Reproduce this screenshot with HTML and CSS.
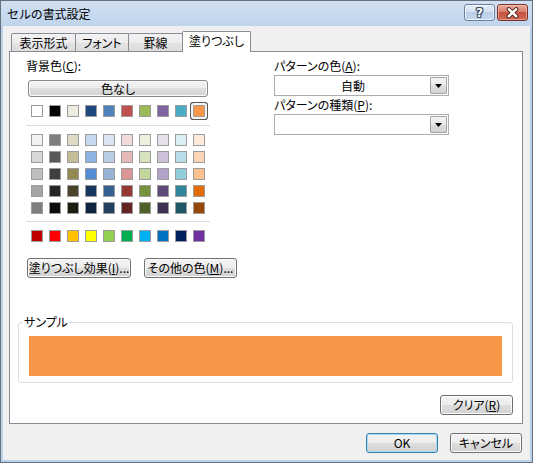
FILE: index.html
```html
<!DOCTYPE html>
<html lang="ja">
<head>
<meta charset="utf-8">
<title>セルの書式設定</title>
<link rel="stylesheet" href="styles.css">
</head>
<body>
<div class="window">
  <div class="titlebar">
    <span class="title">セルの書式設定</span>
    <div class="caption">
      <div class="cap help">?</div>
      <div class="cap close">
        <svg width="31" height="17" viewBox="0 0 31 17">
          <path d="M11.5 5 L19.5 12.5 M19.5 5 L11.5 12.5" stroke="#4b1c16" stroke-width="4.6" stroke-linecap="round" fill="none"/>
          <path d="M11.5 5 L19.5 12.5 M19.5 5 L11.5 12.5" stroke="#ffffff" stroke-width="2.6" stroke-linecap="round" fill="none"/>
        </svg>
      </div>
    </div>
  </div>
  <div class="client">
    <div class="tabs">
      <div class="tab t1">表示形式</div>
      <div class="tab t2">フォント</div>
      <div class="tab t3">罫線</div>
      <div class="tab active">塗りつぶし</div>
    </div>
    <div class="panel">
      <div class="top">
        <div class="left">
          <div class="label">背景色(<u>C</u>):</div>
          <div class="btn nocolor">色なし</div>
          <div class="row theme">
            <span class="sw" style="background:#ffffff"></span>
            <span class="sw" style="background:#000000"></span>
            <span class="sw" style="background:#eeece1"></span>
            <span class="sw" style="background:#1f497d"></span>
            <span class="sw" style="background:#4f81bd"></span>
            <span class="sw" style="background:#c0504d"></span>
            <span class="sw" style="background:#9bbb59"></span>
            <span class="sw" style="background:#8064a2"></span>
            <span class="sw" style="background:#4bacc6"></span>
            <span class="sw selected" style="background:#f79646"></span>
          </div>
          <div class="sep"></div>
          <div class="tints">
            <div class="row">
              <span class="sw" style="background:#f2f2f2"></span>
              <span class="sw" style="background:#7f7f7f"></span>
              <span class="sw" style="background:#ddd9c3"></span>
              <span class="sw" style="background:#c6d9f0"></span>
              <span class="sw" style="background:#dbe5f1"></span>
              <span class="sw" style="background:#f2dcdb"></span>
              <span class="sw" style="background:#ebf1dd"></span>
              <span class="sw" style="background:#e5e0ec"></span>
              <span class="sw" style="background:#dbeef3"></span>
              <span class="sw" style="background:#fdeada"></span>
            </div>
            <div class="row">
              <span class="sw" style="background:#d8d8d8"></span>
              <span class="sw" style="background:#595959"></span>
              <span class="sw" style="background:#c4bd97"></span>
              <span class="sw" style="background:#8db3e2"></span>
              <span class="sw" style="background:#b8cce4"></span>
              <span class="sw" style="background:#e5b9b7"></span>
              <span class="sw" style="background:#d7e3bc"></span>
              <span class="sw" style="background:#ccc1d9"></span>
              <span class="sw" style="background:#b7dde8"></span>
              <span class="sw" style="background:#fbd5b5"></span>
            </div>
            <div class="row">
              <span class="sw" style="background:#bfbfbf"></span>
              <span class="sw" style="background:#3f3f3f"></span>
              <span class="sw" style="background:#938953"></span>
              <span class="sw" style="background:#548dd4"></span>
              <span class="sw" style="background:#95b3d7"></span>
              <span class="sw" style="background:#d99694"></span>
              <span class="sw" style="background:#c3d69b"></span>
              <span class="sw" style="background:#b2a2c7"></span>
              <span class="sw" style="background:#92cddc"></span>
              <span class="sw" style="background:#fac08f"></span>
            </div>
            <div class="row">
              <span class="sw" style="background:#a5a5a5"></span>
              <span class="sw" style="background:#262626"></span>
              <span class="sw" style="background:#494429"></span>
              <span class="sw" style="background:#17365d"></span>
              <span class="sw" style="background:#366092"></span>
              <span class="sw" style="background:#953734"></span>
              <span class="sw" style="background:#76923c"></span>
              <span class="sw" style="background:#5f497a"></span>
              <span class="sw" style="background:#31859b"></span>
              <span class="sw" style="background:#e36c09"></span>
            </div>
            <div class="row">
              <span class="sw" style="background:#7f7f7f"></span>
              <span class="sw" style="background:#0c0c0c"></span>
              <span class="sw" style="background:#1d1b10"></span>
              <span class="sw" style="background:#0f243e"></span>
              <span class="sw" style="background:#244061"></span>
              <span class="sw" style="background:#632423"></span>
              <span class="sw" style="background:#4f6128"></span>
              <span class="sw" style="background:#3f3151"></span>
              <span class="sw" style="background:#205867"></span>
              <span class="sw" style="background:#974806"></span>
            </div>
          </div>
          <div class="sep sep2"></div>
          <div class="row std">
            <span class="sw" style="background:#c00000"></span>
            <span class="sw" style="background:#ff0000"></span>
            <span class="sw" style="background:#ffc000"></span>
            <span class="sw" style="background:#ffff00"></span>
            <span class="sw" style="background:#92d050"></span>
            <span class="sw" style="background:#00b050"></span>
            <span class="sw" style="background:#00b0f0"></span>
            <span class="sw" style="background:#0070c0"></span>
            <span class="sw" style="background:#002060"></span>
            <span class="sw" style="background:#7030a0"></span>
          </div>
        </div>
        <div class="right">
          <div class="label">パターンの色(<u>A</u>):</div>
          <div class="combo">
            <span class="value">自動</span>
            <span class="arrow"><svg width="7" height="4" viewBox="0 0 7 4"><polygon points="0,0 7,0 3.5,4" fill="#000"/></svg></span>
          </div>
          <div class="label label2">パターンの種類(<u>P</u>):</div>
          <div class="combo combo2">
            <span class="value"></span>
            <span class="arrow"><svg width="7" height="4" viewBox="0 0 7 4"><polygon points="0,0 7,0 3.5,4" fill="#000"/></svg></span>
          </div>
        </div>
      </div>
      <div class="effects">
        <div class="btn fx1">塗りつぶし効果(<u>I</u>)...</div>
        <div class="btn fx2">その他の色(<u>M</u>)...</div>
      </div>
      <fieldset class="sample">
        <legend>サンプル</legend>
        <div class="preview"></div>
      </fieldset>
      <div class="clear-row">
        <div class="btn clear">クリア(<u>R</u>)</div>
      </div>
    </div>
    <div class="dialog-buttons">
      <div class="btn dlg default">OK</div>
      <div class="btn dlg">キャンセル</div>
    </div>
  </div>
</div>
</body>
</html>
```
FILE: styles.css
```css
* { box-sizing: border-box; }

body {
  margin: 0;
  font-family: "Noto Sans CJK JP", "Noto Sans", sans-serif;
  font-size: 12px;
  color: #000;
  font-feature-settings: "palt";
}

u { text-decoration: underline; text-underline-offset: 1px; }

.window {
  width: 533px;
  height: 463px;
  border: 1px solid #67717e;
  background: linear-gradient(#d0e0f2, #bfd4ec 25px, #b9d1ea 26px, #b9d1ea);
  display: flex;
  flex-direction: column;
}

.titlebar {
  flex: none;
  height: 25px;
  display: flex;
  align-items: center;
  justify-content: space-between;
  padding: 0 4px 0 6px;
}

.title {
  font-feature-settings: normal;
  line-height: 16px;
  letter-spacing: -0.1px;
}

.caption {
  align-self: flex-start;
  margin-top: 3px;
  display: flex;
  gap: 2px;
}

.cap {
  width: 31px;
  height: 17px;
  border-radius: 3px;
  display: flex;
  align-items: center;
  justify-content: center;
}

.help {
  border: 1px solid #6f819a;
  background: linear-gradient(#e6eef8, #d3e0f0 45%, #bccee6 50%, #c6d8ee);
  box-shadow: inset 0 0 0 1px rgba(255,255,255,0.6);
  color: #fff;
  font-family: "DejaVu Sans", sans-serif;
  font-weight: bold;
  font-size: 12px;
  line-height: 12px;
  text-shadow: 1px 0 0 #3b4e68, -1px 0 0 #3b4e68, 0 1px 0 #3b4e68, 0 -1px 0 #3b4e68,
               1px 1px 0 #3b4e68, -1px -1px 0 #3b4e68, 1px -1px 0 #3b4e68, -1px 1px 0 #3b4e68;
}

.close {
  border: 1px solid #7f3328;
  background: linear-gradient(#eaa99c, #d9806f 45%, #c8513f 50%, #cd6a55);
  box-shadow: inset 0 0 0 1px rgba(255,220,210,0.45);
}

.client {
  flex: 1;
  margin: 0 2px 2px;
  background: #f0f0f0;
  padding-top: 5px;
  display: flex;
  flex-direction: column;
}

.tabs {
  display: flex;
  align-items: flex-end;
  height: 20px;
  margin-left: 8px;
}

.tab {
  height: 18px;
  border: 1px solid #898c95;
  border-bottom: none;
  border-radius: 2px 2px 0 0;
  background: linear-gradient(#f3f3f3, #ececec 50%, #e3e3e3 51%, #dddddd);
  margin-left: -1px;
  display: flex;
  align-items: center;
  justify-content: center;
  line-height: 16px;
  white-space: nowrap;
}

.t1 { width: 65px; margin-left: 0; }
.t2 { width: 54px; }
.t3 { width: 55px; }

.tab.active {
  width: 69px;
  height: 21px;
  background: #fff;
  margin-bottom: -1px;
  position: relative;
  z-index: 1;
  padding-bottom: 2px;
}

.panel {
  margin: 0 7px 0 6px;
  border: 1px solid #898c95;
  background: #fff;
  padding: 6px 0 8px;
}

.top {
  display: grid;
  grid-template-columns: 184px 175px;
  column-gap: 64px;
  padding-left: 16px;
}

.label { line-height: 16px; white-space: nowrap; }

.btn {
  height: 20px;
  border: 1px solid #707070;
  border-radius: 3px;
  background: linear-gradient(#f3f3f3, #ececec 50%, #dedede 50%, #d2d2d2);
  box-shadow: inset 0 0 0 1px #fbfbfb;
  display: flex;
  align-items: center;
  justify-content: center;
  white-space: nowrap;
  line-height: 16px;
}

.nocolor {
  width: 180px;
  height: 17px;
  margin: 6px 0 0 2px;
  border-color: #8a8a8a;
}

.row {
  display: flex;
  gap: 6px;
  padding-left: 5px;
}

.theme { margin-top: 8px; }

.sw {
  width: 12px;
  height: 12px;
  border: 1px solid #9c9c9c;
  flex: none;
}

.sw.selected {
  border-radius: 1px;
  box-shadow: 0 0 0 2px #f4f4f4, 0 0 0 3px #5a5a5a;
}

.sep {
  height: 1px;
  background: #dcdcdc;
  margin-top: 8px;
}

.sep2 { margin-top: 7px; }

.tints {
  margin-top: 8px;
  display: flex;
  flex-direction: column;
  gap: 5px;
}

.std { margin-top: 8px; }

.combo {
  height: 21px;
  margin-top: 1px;
  border: 1px solid #abadb3;
  background: #fff;
  display: flex;
  align-items: center;
  padding: 1px;
}

.combo .value {
  flex: 1;
  text-align: center;
  line-height: 16px;
}

.combo .arrow {
  width: 17px;
  height: 17px;
  border: 1px solid #a3a3a3;
  border-radius: 1px;
  background: linear-gradient(#f4f4f4, #e8e8e8 50%, #dcdcdc 51%, #d4d4d4);
  display: flex;
  align-items: center;
  justify-content: center;
}

.label2 { margin-top: 1px; }

.effects {
  display: flex;
  gap: 13px;
  margin: 16px 0 0 17px;
}

.fx1 { width: 104px; }
.fx2 { width: 93px; }

.sample {
  margin: 36px 9px 0 8px;
  border: 1px solid #d5dfe5;
  border-radius: 3px;
  padding: 0 10px 6px;
  min-inline-size: 0;
}

.sample legend {
  padding: 0 1px;
  margin-left: -6px;
  line-height: 16px;
}

.preview {
  margin-top: 6px;
  height: 40px;
  background: #f79646;
}

.clear-row {
  display: flex;
  justify-content: flex-end;
  padding-right: 9px;
  margin-top: 12px;
}

.clear { width: 73px; }

.dialog-buttons {
  display: flex;
  justify-content: flex-end;
  gap: 12px;
  padding-right: 8px;
  margin-top: 9px;
}

.dlg { width: 72px; }

.default {
  border-color: #3c7fb1;
  box-shadow: inset 0 0 0 1px #a7d9f5;
}
```
